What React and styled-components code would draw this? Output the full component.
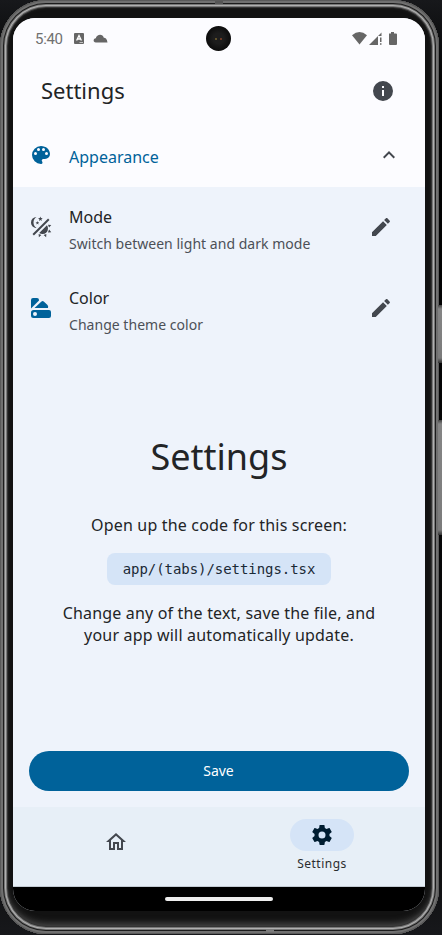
import React from 'react';
import styled, { createGlobalStyle } from 'styled-components';

const Global = createGlobalStyle`
  * { box-sizing: border-box; }
  body { margin: 0; background: #15171a; font-family: "Noto Sans", sans-serif; color: #222426; }
  h1, h2, p { margin: 0; font-weight: 400; }
  button { border: 0; padding: 0; background: none; font: inherit; color: inherit; }
  svg { display: block; }
`;

const Stage = styled.div`
  position: relative;
  width: 442px;
  height: 935px;
  overflow: hidden;
  background: linear-gradient(#17181b, #000 10%, #0b0b0c 90%, #17181b);
`;

const SideButton = styled.i`
  position: absolute;
  right: 0;
  top: ${p => p.$top}px;
  width: 4px;
  height: ${p => p.$height}px;
  background: linear-gradient(#444, #858585 4px, #7b7b7b calc(100% - 5px), #333);
`;

const AntennaBand = styled.i`
  position: absolute;
  left: ${p => p.$left}px;
  top: ${p => p.$top}px;
  width: 8px;
  height: 3px;
  background: ${p => p.$color};
`;

const Phone = styled.div`
  width: 439px;
  height: 934px;
  padding: 18px 14px 23px 13px;
  border-radius: 46px;
  background: #121212;
  box-shadow:
    inset 0 0 0 1px #5a5a5a,
    inset 0 0 0 3px #707070,
    inset 0 0 0 4px #1c1c1c,
    inset 0 0 0 5px #777,
    inset 0 0 0 6px #b0b0b0,
    inset 0 0 0 7px #777,
    inset 0 0 0 8px #333,
    inset 0 -7px 6px 4px #444,
    inset 0 0 3px 8px #222;
`;

const Screen = styled.main`
  position: relative;
  display: flex;
  flex-direction: column;
  width: 412px;
  height: 893px;
  border-radius: 22px;
  overflow: hidden;
  background: #eef3fb;
`;

const StatusBar = styled.header`
  display: flex;
  align-items: center;
  flex: 0 0 41px;
  padding: 1px 28px 0 22px;
  background: #fcfcff;
  color: #707070;
  font: 15px/18px Roboto, sans-serif;
`;

const Clock = styled.span`
  width: 39px;
  letter-spacing: -0.3px;
`;

const StatusIcons = styled.div`
  display: flex;
  align-items: center;
  gap: ${p => p.$gap}px;
  margin-left: ${p => (p.$end ? 'auto' : '0')};
  padding-bottom: 1px;
`;

const Camera = styled.div`
  position: absolute;
  top: 8px;
  left: 193px;
  width: 25px;
  height: 25px;
  border-radius: 50%;
  background:
    radial-gradient(circle at 10px 13px, #6b5a2c 0 0.6px, transparent 1.3px),
    radial-gradient(circle at 15px 13px, #7a3f28 0 0.6px, transparent 1.3px),
    radial-gradient(circle, #1d1d1d 30%, #101010 60%, #070707);
`;

const AppBar = styled.div`
  display: flex;
  align-items: center;
  justify-content: space-between;
  flex: 0 0 64px;
  padding: 0 30px 1px 28px;
  background: #fcfcff;
`;

const Title = styled.h1`
  padding-bottom: 2px;
  font-size: 22px;
  line-height: 28px;
`;

const SectionHeader = styled.button`
  display: flex;
  align-items: center;
  flex: 0 0 64px;
  padding: 0 24px 1px 16px;
  background: #fcfcff;
  color: #00629a;
  font-size: 16px;
  text-align: left;
`;

const SectionName = styled.span`
  flex: 1;
  margin-left: 16px;
  padding-top: 4px;
`;

const Setting = styled.div`
  display: flex;
  align-items: center;
  flex: 0 0 81.3px;
  padding: 0 32px 1px 16px;
`;

const SettingText = styled.div`
  flex: 1;
  margin-left: 16px;
  padding-top: 5px;
`;

const SettingName = styled.p`
  font-size: 16px;
  line-height: 24px;
`;

const SettingHint = styled.p`
  margin-top: 4px;
  color: #4c5057;
  font-size: 14px;
  line-height: 22px;
  letter-spacing: 0.03px;
`;

const Intro = styled.section`
  display: flex;
  flex-direction: column;
  align-items: center;
  flex: 1;
  padding-top: 85px;
  text-align: center;
`;

const Heading = styled.h2`
  margin-bottom: 35px;
  font-size: 36px;
  line-height: 44px;
`;

const Copy = styled.p`
  font-size: 16px;
  line-height: 22px;
  letter-spacing: 0.18px;
`;

const CodeTag = styled.code`
  margin: 17px 0 17px;
  padding: 0 16px;
  border-radius: 8px;
  background: #d5e4f7;
  color: #1a2936;
  font: 14px/32px "DejaVu Sans Mono", monospace;
  letter-spacing: -0.05px;
`;

const SaveButton = styled.button`
  flex: 0 0 40px;
  margin: 0 16.5px 16.5px 15.5px;
  padding-bottom: 1px;
  border-radius: 20px;
  background: #00629a;
  color: #fff;
  font-size: 14px;
`;

const TabBar = styled.nav`
  display: grid;
  grid-template-columns: 1fr 1fr;
  flex: 0 0 80px;
  border-bottom: 1px solid #c3cbd3;
  background: #e7eff7;
`;

const Tab = styled.button`
  display: flex;
  flex-direction: column;
  align-items: center;
  justify-content: ${p => (p.$active ? 'flex-start' : 'center')};
  padding-top: ${p => (p.$active ? 12 : 0)}px;
  padding-bottom: ${p => (p.$active ? 0 : 9)}px;
  color: ${p => (p.$active ? '#001d31' : '#43474e')};
`;

const TabPill = styled.span`
  display: grid;
  place-items: center;
  width: 64px;
  height: 32px;
  border-radius: 16px;
  background: #d5e4f7;
`;

const TabLabel = styled.span`
  margin-top: 5px;
  color: #2a2c2e;
  font-size: 12px;
  line-height: 16px;
  letter-spacing: 0.5px;
`;

const GestureBar = styled.footer`
  display: flex;
  justify-content: center;
  flex: 0 0 24px;
  padding-top: 10px;
  background: #000;
`;

const GestureHandle = styled.i`
  width: 108px;
  height: 4px;
  border-radius: 2px;
  background: #eee;
`;

const paths = {
  palette: 'M17.5,12A1.5,1.5 0 0,1 16,10.5A1.5,1.5 0 0,1 17.5,9A1.5,1.5 0 0,1 19,10.5A1.5,1.5 0 0,1 17.5,12M14.5,8A1.5,1.5 0 0,1 13,6.5A1.5,1.5 0 0,1 14.5,5A1.5,1.5 0 0,1 16,6.5A1.5,1.5 0 0,1 14.5,8M9.5,8A1.5,1.5 0 0,1 8,6.5A1.5,1.5 0 0,1 9.5,5A1.5,1.5 0 0,1 11,6.5A1.5,1.5 0 0,1 9.5,8M6.5,12A1.5,1.5 0 0,1 5,10.5A1.5,1.5 0 0,1 6.5,9A1.5,1.5 0 0,1 8,10.5A1.5,1.5 0 0,1 6.5,12M12,3A9,9 0 0,0 3,12A9,9 0 0,0 12,21A1.5,1.5 0 0,0 13.5,19.5C13.5,19.11 13.35,18.76 13.11,18.5C12.88,18.23 12.73,17.88 12.73,17.5A1.5,1.5 0 0,1 14.23,16H16A5,5 0 0,0 21,11C21,6.58 16.97,3 12,3Z',
  mode: 'M7.5,2C5.71,3.15 4.5,5.18 4.5,7.5C4.5,9.82 5.71,11.85 7.53,13C4.46,13 2,10.54 2,7.5A5.5,5.5 0 0,1 7.5,2M19.07,3.5L20.5,4.93L4.93,20.5L3.5,19.07L19.07,3.5M12.89,5.93L11.41,5L9.97,6L10.39,4.3L9,3.24L10.75,3.12L11.33,1.47L12,3.1L13.73,3.13L12.38,4.26L12.89,5.93M9.59,9.54L8.43,8.81L7.31,9.59L7.65,8.27L6.56,7.44L7.92,7.35L8.37,6.06L8.88,7.33L10.24,7.36L9.19,8.23L9.59,9.54M19,13.5A5.5,5.5 0 0,1 13.5,19C12.28,19 11.15,18.6 10.24,17.93L17.93,10.24C18.6,11.15 19,12.28 19,13.5M14.6,20.08L17.37,18.93L17.13,22.28L14.6,20.08M18.93,17.38L20.08,14.61L22.28,17.15L18.93,17.38M20.08,12.42L18.94,9.64L22.28,9.88L20.08,12.42M9.63,18.93L12.4,20.08L9.87,22.27L9.63,18.93Z',
  swatch: 'M4,2H8Q10,2 10,4V4.5L2,12.5V4Q2,2 4,2M5.5,12L12.5,5.5Q13.7,4.5 15,5.7L18.5,9Q19.6,10.5 19,12ZM4.5,14H20Q22,14 22,16V20Q22,22 20,22H4.5Q2,22 2,19.5V16.5Q2,14 4.5,14M6,16A2,2 0 1,0 6,20A2,2 0 1,0 6,16Z',
  pencil: 'M20.71,7.04C21.1,6.65 21.1,6 20.71,5.63L18.37,3.29C18,2.9 17.35,2.9 16.96,3.29L15.12,5.12L18.87,8.87M3,17.25V21H6.75L17.81,9.93L14.06,6.18L3,17.25Z',
  info: 'M13,9H11V7H13M13,17H11V11H13M12,2A10,10 0 0,0 2,12A10,10 0 0,0 12,22A10,10 0 0,0 22,12A10,10 0 0,0 12,2Z',
  chevron: 'M7.41,15.41L12,10.83L16.59,15.41L18,14L12,8L6,14L7.41,15.41Z',
  home: 'M12 5.69L17 10.19V18H15V12H9V18H7V10.19L12 5.69M12 3L2 12H5V20H11V14H13V20H19V12H22L12 3Z',
  cog: 'M12,15.5A3.5,3.5 0 0,1 8.5,12A3.5,3.5 0 0,1 12,8.5A3.5,3.5 0 0,1 15.5,12A3.5,3.5 0 0,1 12,15.5M19.43,12.97C19.47,12.65 19.5,12.33 19.5,12C19.5,11.67 19.47,11.34 19.43,11L21.54,9.37C21.73,9.22 21.78,8.95 21.66,8.73L19.66,5.27C19.54,5.05 19.27,4.96 19.05,5.05L16.56,6.05C16.04,5.66 15.5,5.32 14.87,5.07L14.5,2.42C14.46,2.18 14.25,2 14,2H10C9.75,2 9.54,2.18 9.5,2.42L9.13,5.07C8.5,5.32 7.96,5.66 7.44,6.05L4.95,5.05C4.73,4.96 4.46,5.05 4.34,5.27L2.34,8.73C2.21,8.95 2.27,9.22 2.46,9.37L4.57,11C4.53,11.34 4.5,11.67 4.5,12C4.5,12.33 4.53,12.65 4.57,12.97L2.46,14.63C2.27,14.78 2.21,15.05 2.34,15.27L4.34,18.73C4.46,18.95 4.73,19.03 4.95,18.95L7.44,17.94C7.96,18.34 8.5,18.68 9.13,18.93L9.5,21.58C9.54,21.82 9.75,22 10,22H14C14.25,22 14.46,21.82 14.5,21.58L14.87,18.93C15.5,18.67 16.04,18.34 16.56,17.94L19.05,18.95C19.27,19.03 19.54,18.95 19.66,18.73L21.66,15.27C21.78,15.05 21.73,14.78 21.54,14.63L19.43,12.97Z',
};

const IconSvg = styled.svg`
  flex: none;
  width: 24px;
  height: 24px;
  fill: ${p => p.$color || 'currentColor'};
`;

const Icon = ({ name, color }) => (
  <IconSvg viewBox="0 0 24 24" $color={color}>
    <path fillRule="evenodd" d={paths[name]} />
  </IconSvg>
);

const SettingRow = ({ icon, color, name, hint }) => (
  <Setting>
    <Icon name={icon} color={color} />
    <SettingText>
      <SettingName>{name}</SettingName>
      <SettingHint>{hint}</SettingHint>
    </SettingText>
    <Icon name="pencil" color="#43474e" />
  </Setting>
);

export default function App() {
  return (
    <>
      <Global />
      <Stage>
        <SideButton $top={305} $height={58} />
        <SideButton $top={420} $height={115} />
        <Phone>
          <Screen>
            <StatusBar>
              <Clock>5:40</Clock>
              <StatusIcons $gap={9}>
                <svg width="10" height="11" viewBox="0 0 10 11">
                  <rect width="10" height="11" rx="1" fill="#666" />
                  <path d="M2.6 7.5 5 2.5l2.4 5M3.5 6h3" stroke="#fff" strokeWidth="1.3" fill="none" />
                  <path d="M5.5 9.5H9" stroke="#fff" strokeWidth=".6" />
                </svg>
                <svg width="15" height="9" viewBox="0 0 15 9">
                  <path d="M2.8 8.5C-.2 8.3 0 4.6 2.8 4.3 3.6-.2 10-.8 10.8 3.8 12.5 3.7 14 5 14.5 8.5Z" fill="#666" />
                </svg>
              </StatusIcons>
              <StatusIcons $gap={2} $end>
                <svg width="15" height="13" viewBox="0 0 15 13">
                  <path d="M0 3.2Q7.5-3 15 3.2L7.5 12.5Z" fill="#666" />
                </svg>
                <svg width="13" height="13" viewBox="0 0 13 13">
                  <path d="M0 13 12.5.5V4H9v9ZM11 5.5h1.5V10H11ZM11 11.3h1.5v1.5H11Z" fill="#666" />
                </svg>
                <svg width="13" height="13" viewBox="0 0 13 13">
                  <path d="M5 1.5h2V0h3v1.5h2q1 0 1 1V12q0 1-1 1H6q-1 0-1-1V2Z" fill="#666" />
                </svg>
              </StatusIcons>
              <Camera />
            </StatusBar>
            <AppBar>
              <Title>Settings</Title>
              <Icon name="info" color="#43474e" />
            </AppBar>
            <SectionHeader>
              <Icon name="palette" />
              <SectionName>Appearance</SectionName>
              <Icon name="chevron" color="#43474e" />
            </SectionHeader>
            <SettingRow icon="mode" color="#43474e" name="Mode" hint="Switch between light and dark mode" />
            <SettingRow icon="swatch" color="#00629a" name="Color" hint="Change theme color" />
            <Intro>
              <Heading>Settings</Heading>
              <Copy>Open up the code for this screen:</Copy>
              <CodeTag>app/(tabs)/settings.tsx</CodeTag>
              <Copy>Change any of the text, save the file, and<br />your app will automatically update.</Copy>
            </Intro>
            <SaveButton>Save</SaveButton>
            <TabBar>
              <Tab>
                <Icon name="home" />
              </Tab>
              <Tab $active>
                <TabPill>
                  <Icon name="cog" />
                </TabPill>
                <TabLabel>Settings</TabLabel>
              </Tab>
            </TabBar>
            <GestureBar>
              <GestureHandle />
            </GestureBar>
          </Screen>
        </Phone>
        <AntennaBand $left={215} $top={1} $color="#565656" />
        <AntennaBand $left={266} $top={929} $color="#7c7c7c" />
      </Stage>
    </>
  );
}
